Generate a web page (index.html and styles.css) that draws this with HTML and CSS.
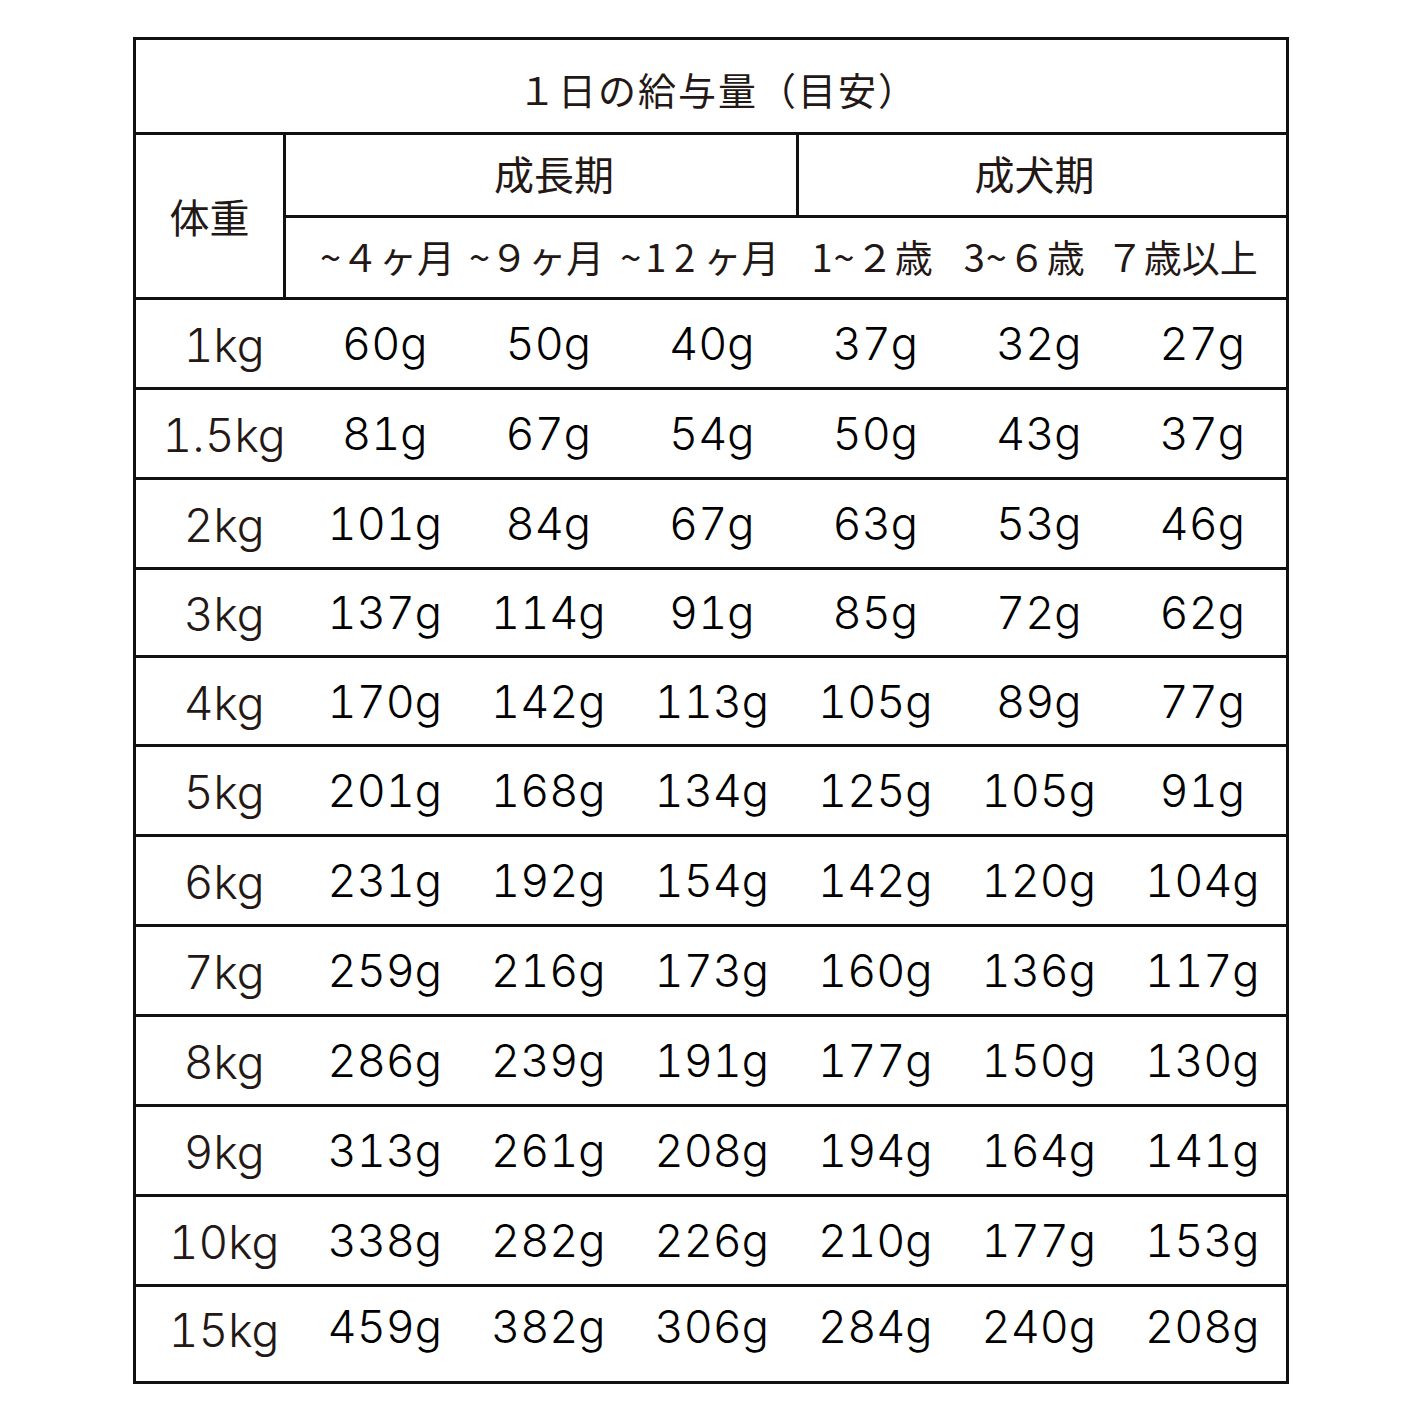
FILE: index.html
```html
<!DOCTYPE html>
<html lang="ja">
<head>
<meta charset="utf-8">
<title>1日の給与量（目安）</title>
<link rel="stylesheet" href="styles.css">
</head>
<body>
<div class="table">
  <div class="title">１日の給与量（目安）</div>
  <div class="head">
    <div class="weight-h">体重</div>
    <div class="head-right">
      <div class="groups">
        <div class="grp grp-grow">成長期</div>
        <div class="grp grp-adult">成犬期</div>
      </div>
      <div class="ages">
        <span class="age a1">~４ヶ月</span>
        <span class="age a2">~９ヶ月</span>
        <span class="age a3">~<span class="wide">12</span>ヶ月</span>
        <span class="age a4">1~２歳</span>
        <span class="age a5">3~６歳</span>
        <span class="age a6">７歳以上</span>
      </div>
    </div>
  </div>
  <div class="row"><div class="w">1kg</div><div class="v">60g</div><div class="v">50g</div><div class="v">40g</div><div class="v">37g</div><div class="v">32g</div><div class="v">27g</div></div>
  <div class="row"><div class="w">1.5kg</div><div class="v">81g</div><div class="v">67g</div><div class="v">54g</div><div class="v">50g</div><div class="v">43g</div><div class="v">37g</div></div>
  <div class="row"><div class="w">2kg</div><div class="v">101g</div><div class="v">84g</div><div class="v">67g</div><div class="v">63g</div><div class="v">53g</div><div class="v">46g</div></div>
  <div class="row"><div class="w">3kg</div><div class="v">137g</div><div class="v">114g</div><div class="v">91g</div><div class="v">85g</div><div class="v">72g</div><div class="v">62g</div></div>
  <div class="row"><div class="w">4kg</div><div class="v">170g</div><div class="v">142g</div><div class="v">113g</div><div class="v">105g</div><div class="v">89g</div><div class="v">77g</div></div>
  <div class="row"><div class="w">5kg</div><div class="v">201g</div><div class="v">168g</div><div class="v">134g</div><div class="v">125g</div><div class="v">105g</div><div class="v">91g</div></div>
  <div class="row"><div class="w">6kg</div><div class="v">231g</div><div class="v">192g</div><div class="v">154g</div><div class="v">142g</div><div class="v">120g</div><div class="v">104g</div></div>
  <div class="row"><div class="w">7kg</div><div class="v">259g</div><div class="v">216g</div><div class="v">173g</div><div class="v">160g</div><div class="v">136g</div><div class="v">117g</div></div>
  <div class="row"><div class="w">8kg</div><div class="v">286g</div><div class="v">239g</div><div class="v">191g</div><div class="v">177g</div><div class="v">150g</div><div class="v">130g</div></div>
  <div class="row"><div class="w">9kg</div><div class="v">313g</div><div class="v">261g</div><div class="v">208g</div><div class="v">194g</div><div class="v">164g</div><div class="v">141g</div></div>
  <div class="row"><div class="w">10kg</div><div class="v">338g</div><div class="v">282g</div><div class="v">226g</div><div class="v">210g</div><div class="v">177g</div><div class="v">153g</div></div>
  <div class="row last"><div class="w">15kg</div><div class="v">459g</div><div class="v">382g</div><div class="v">306g</div><div class="v">284g</div><div class="v">240g</div><div class="v">208g</div></div>
</div>
</body>
</html>
```

FILE: styles.css
```css
* { box-sizing: border-box; }

html, body {
  margin: 0;
  padding: 0;
  background: #ffffff;
}

body {
  font-family: "Noto Sans CJK JP", "Noto Sans", sans-serif;
  color: #231815;
}

.table {
  margin: 37px 0 0 133px;
  width: 1156px;
  border: 3px solid #111111;
}

.title {
  height: 95px;
  border-bottom: 3px solid #111111;
  display: flex;
  align-items: center;
  justify-content: center;
  font-size: 38px;
  letter-spacing: 2px;
  padding-top: 4px;
  padding-left: 14px;
  color: #231815;
}

.head {
  display: flex;
  border-bottom: 3px solid #111111;
}

.weight-h {
  width: 150px;
  border-right: 3px solid #111111;
  display: flex;
  align-items: center;
  justify-content: center;
  font-size: 40px;
}

.head-right {
  flex: 1;
  display: flex;
  flex-direction: column;
}

.groups {
  display: flex;
  height: 83px;
  border-bottom: 3px solid #111111;
}

.grp {
  display: flex;
  align-items: center;
  justify-content: center;
  font-size: 40px;
  padding-bottom: 4px;
}

.grp-grow {
  width: 513px;
  border-right: 3px solid #111111;
  padding-left: 26px;
}

.grp-adult {
  flex: 1;
  padding-right: 16px;
}

.ages {
  height: 79px;
  display: flex;
  align-items: center;
  justify-content: flex-start;
  font-size: 38px;
  white-space: nowrap;
  padding-left: 34px;
  padding-bottom: 4px;
}

.age.a2 { margin-left: 14px; }
.age.a3 { margin-left: 16px; }
.age.a4 { margin-left: 32px; letter-spacing: 1px; }
.age.a5 { margin-left: 30px; letter-spacing: 1px; }
.age.a6 { margin-left: 20px; }

.wide {
  letter-spacing: 8px;
  padding-left: 4px;
}

.row {
  display: grid;
  grid-template-columns: 166px repeat(6, 163.5px);
  height: 90px;
  border-bottom: 3px solid #111111;
  align-items: center;
}

.row:nth-child(6) { height: 88px; }
.row:nth-child(7) { height: 89px; }

.row.last {
  height: 94px;
  border-bottom: none;
  align-items: start;
  padding-top: 12px;
}

.w {
  text-align: center;
  padding-left: 10px;
  font-family: Inter, "Noto Sans", sans-serif;
  font-size: 46px;
  font-weight: 300;
  font-variant-numeric: tabular-nums;
  letter-spacing: 0;
  color: #231815;
  padding-top: 3px;
}

.v {
  text-align: center;
  font-family: Inter, "Noto Sans", sans-serif;
  font-size: 45px;
  font-weight: 300;
  font-variant-numeric: tabular-nums;
  letter-spacing: 0;
  padding-left: 2px;
  color: #000000;
}
```
